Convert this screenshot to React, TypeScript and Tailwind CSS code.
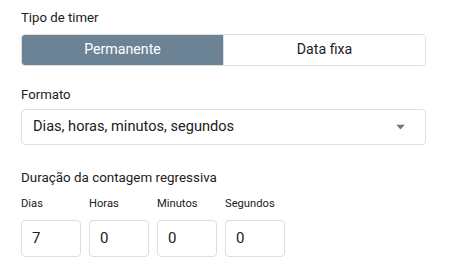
import { useState } from 'react';

const units = [
  { label: 'Dias', value: '7' },
  { label: 'Horas', value: '0' },
  { label: 'Minutos', value: '0' },
  { label: 'Segundos', value: '0' },
];

export default function App() {
  const [mode, setMode] = useState<'perm' | 'fixed'>('perm');

  return (
    <div className="w-[453px] h-[275px] bg-white text-[#212121] font-['Roboto',sans-serif]">
      <div className="ml-[21px] w-[405px] pt-[10px]">
        {/* Tipo de timer */}
        <div className="text-[13.2px] leading-4 mb-2">Tipo de timer</div>
        <div className="flex h-8 rounded border border-[#dedede] overflow-hidden">
          <button
            onClick={() => setMode('perm')}
            className={`flex-1 text-[14.2px] ${mode === 'perm' ? 'bg-[#6c8396] text-white' : 'bg-white text-[#212121]'}`}
          >
            Permanente
          </button>
          <button
            onClick={() => setMode('fixed')}
            className={`flex-1 text-[14.2px] border-l border-[#dedede] ${mode === 'fixed' ? 'bg-[#6c8396] text-white' : 'bg-white text-[#212121]'}`}
          >
            Data fixa
          </button>
        </div>

        {/* Formato */}
        <div className="text-[13.2px] leading-4 mt-[21px] mb-[6px]">Formato</div>
        <div className="relative flex items-center h-9 rounded border border-[#dedede] pl-[11px] pr-3">
          <span className="text-[14.6px]">Dias, horas, minutos, segundos</span>
          <svg className="absolute right-[20px] top-1/2 -translate-y-1/2" width="9" height="5" viewBox="0 0 9 5">
            <path d="M0 0h9L4.5 5z" fill="#757575" />
          </svg>
        </div>

        {/* Duração */}
        <div className="text-[13.4px] leading-4 mt-[25px]">Duração da contagem regressiva</div>
        <div className="flex gap-2 mt-[10px]">
          {units.map((u) => (
            <div key={u.label} className="w-[60px]">
              <div className="text-[11.2px] leading-4 mb-[8px]">{u.label}</div>
              <div className="h-[37px] rounded border border-[#dedede] flex items-center pl-[10px] text-[15px]">
                {u.value}
              </div>
            </div>
          ))}
        </div>
      </div>
    </div>
  );
}
